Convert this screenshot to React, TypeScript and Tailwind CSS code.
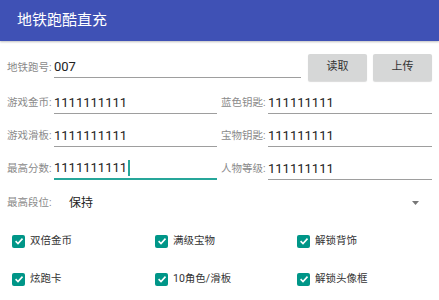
import { ReactNode } from 'react';

const font = { fontFamily: "Roboto, 'Noto Sans CJK SC', sans-serif" };

function Field({ label, value, active, grow }: { label: string; value: string; active?: boolean; grow?: boolean }) {
    return (
        <div className={`flex items-end ${grow ? 'flex-1 ml-[4px]' : 'w-[210px]'}`}>
            <div className="w-[47px] h-[22px] flex items-center text-[10.5px] text-[#8a8a8a] shrink-0">{label}</div>
            <div
                className={`flex-1 h-[22px] flex items-center text-[13px] text-[#222] ${
                    active ? 'border-b-2 border-[#26a69a]' : 'border-b border-[#9e9e9e]'
                }`}
            >
                <span>{value}</span>
                {active && <span className="w-[2px] h-[16px] bg-[#26a69a] ml-[1px]" />}
            </div>
        </div>
    );
}

function Check({ children }: { children: ReactNode }) {
    return (
        <div className="flex items-center gap-[5px]">
            <div className="w-[13px] h-[13px] rounded-[2px] bg-[#009688] flex items-center justify-center">
                <svg width="10" height="10" viewBox="0 0 10 10">
                    <path d="M1.6 5.2 L4 7.5 L8.5 2.6" fill="none" stroke="white" strokeWidth="1.6" />
                </svg>
            </div>
            <span className="text-[10.5px] text-[#333]">{children}</span>
        </div>
    );
}

export default function App() {
    return (
        <div className="w-[439px] h-[300px] bg-white overflow-hidden" style={font}>
            {/* Toolbar */}
            <div className="h-[41px] bg-[#3F51B5] flex items-center pl-[17px] text-white text-[15px] shadow-[0_1px_2px_rgba(0,0,0,0.25)]">
                地铁跑酷直充
            </div>

            <div className="px-[7px]">
                {/* ID row */}
                <div className="mt-[13px] h-[27px] flex items-center">
                    <div className="flex items-end flex-1">
                        <div className="w-[47px] h-[21px] flex items-center text-[10.5px] text-[#8a8a8a]">地铁跑号:</div>
                        <div className="flex-1 h-[21px] flex items-center border-b border-[#9e9e9e] text-[13px] text-[#222]">007</div>
                    </div>
                    <button className="ml-[7px] w-[59px] h-[27px] bg-[#d6d7d7] rounded-[2px] text-[11px] text-[#333] shadow-[0_1px_1px_rgba(0,0,0,0.15)]">
                        读取
                    </button>
                    <button className="ml-[6px] w-[59px] h-[27px] bg-[#d6d7d7] rounded-[2px] text-[11px] text-[#333] shadow-[0_1px_1px_rgba(0,0,0,0.15)]">
                        上传
                    </button>
                </div>

                {/* Value rows */}
                <div className="h-[33px] flex items-end">
                    <Field label="游戏金币:" value="1111111111" />
                    <Field label="蓝色钥匙:" value="111111111" grow />
                </div>
                <div className="h-[33px] flex items-end">
                    <Field label="游戏滑板:" value="1111111111" />
                    <Field label="宝物钥匙:" value="111111111" grow />
                </div>
                <div className="h-[33px] flex items-end">
                    <Field label="最高分数:" value="1111111111" active />
                    <Field label="人物等级:" value="111111111" grow />
                </div>

                {/* Rank select */}
                <div className="h-[46px] flex items-center">
                    <span className="w-[62px] text-[10.5px] text-[#8a8a8a]">最高段位:</span>
                    <span className="flex-1 text-[12px] text-[#222]">保持</span>
                    <svg width="7" height="4" viewBox="0 0 7 4" className="mr-[13px]">
                        <path d="M0 0 L7 0 L3.5 4 Z" fill="#777" />
                    </svg>
                </div>
            </div>

            {/* Checkboxes */}
            <div className="pl-[12px] grid grid-cols-[143px_142px_1fr] gap-y-[8px]">
                <div className="h-[30px] flex items-center"><Check>双倍金币</Check></div>
                <div className="h-[30px] flex items-center"><Check>满级宝物</Check></div>
                <div className="h-[30px] flex items-center"><Check>解锁背饰</Check></div>
                <div className="h-[30px] flex items-center"><Check>炫跑卡</Check></div>
                <div className="h-[30px] flex items-center"><Check>10角色/滑板</Check></div>
                <div className="h-[30px] flex items-center"><Check>解锁头像框</Check></div>
            </div>
        </div>
    );
}
